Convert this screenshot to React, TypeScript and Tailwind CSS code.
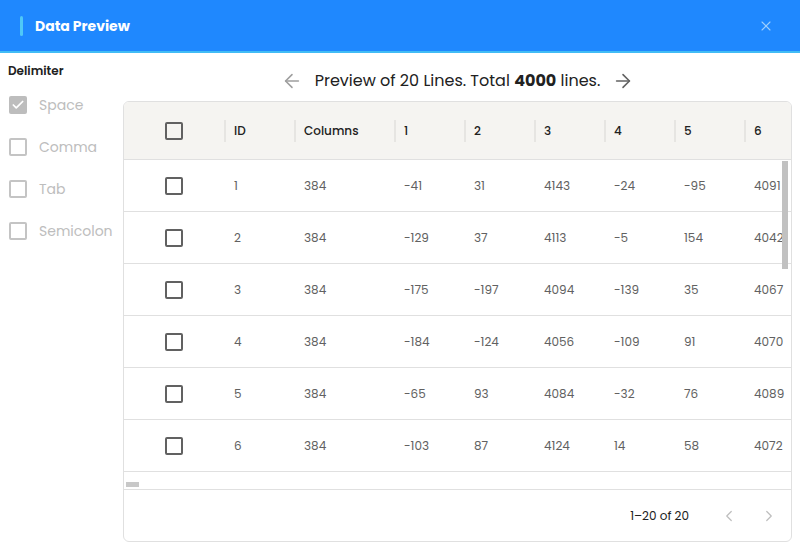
import { ArrowLeft, ArrowRight, X, Check, ChevronLeft, ChevronRight } from 'lucide-react';

const rows = [
  ['1', '384', '-41', '31', '4143', '-24', '-95', '4091'],
  ['2', '384', '-129', '37', '4113', '-5', '154', '4042'],
  ['3', '384', '-175', '-197', '4094', '-139', '35', '4067'],
  ['4', '384', '-184', '-124', '4056', '-109', '91', '4070'],
  ['5', '384', '-65', '93', '4084', '-32', '76', '4089'],
  ['6', '384', '-103', '87', '4124', '14', '58', '4072'],
];

const headers = ['ID', 'Columns', '1', '2', '3', '4', '5', '6'];
const widths = ['w-[70px]', 'w-[100px]', 'w-[70px]', 'w-[70px]', 'w-[70px]', 'w-[70px]', 'w-[70px]', 'w-[70px]'];

function Box({ checked, disabled }: { checked?: boolean; disabled?: boolean }) {
  if (checked) {
    return (
      <span className="flex h-[18px] w-[18px] items-center justify-center rounded-[2px] bg-[#bdbdbd]">
        <Check size={14} strokeWidth={3} className="text-white" />
      </span>
    );
  }
  return (
    <span
      className={`block h-[18px] w-[18px] rounded-[2px] border-2 ${disabled ? 'border-[#c4c4c4]' : 'border-[#616161]'}`}
    />
  );
}

export default function App() {
  return (
    <div className="h-[550px] w-[800px] overflow-hidden bg-white font-['Poppins','Inter',sans-serif] text-[#212121]">
      <div className="flex h-[53px] items-center justify-between border-b-2 border-[#42bcf5] bg-[#1f88fe] pl-5 pr-[26px] pt-[1px]">
        <div className="flex items-center gap-3">
          <span className="h-5 w-[3px] rounded-sm bg-[#4fc8f7]" />
          <span className="text-[14px] font-bold text-white">Data Preview</span>
        </div>
        <X size={16} strokeWidth={1.6} className="text-[#9fcffd]" />
      </div>

      <div className="flex">
        <div className="w-[123px] shrink-0 pl-2 pt-[9px]">
          <div className="text-[12px] font-semibold text-[#212121]">Delimiter</div>
          <div className="mt-[16px] flex flex-col gap-6">
            {['Space', 'Comma', 'Tab', 'Semicolon'].map((l, i) => (
              <div key={l} className="flex h-[18px] items-center gap-3 pl-[1px]">
                <Box checked={i === 0} disabled />
                <span className="text-[14px] text-[#bdbdbd]">{l}</span>
              </div>
            ))}
          </div>
        </div>

        <div className="flex min-w-0 flex-1 flex-col pr-2">
          <div className="flex h-[48px] items-center justify-center gap-3 pt-[8px]">
            <ArrowLeft size={22} strokeWidth={1.7} className="text-[#9e9e9e]" />
            <span className="text-[16px]">
              Preview of 20 Lines. Total <b className="font-bold">4000</b> lines.
            </span>
            <ArrowRight size={22} strokeWidth={1.7} className="text-[#616161]" />
          </div>

          <div className="h-[441px] overflow-hidden rounded-md border border-[#e0e0e0]">
            <div className="relative overflow-hidden">
              <div className="flex h-[58px] w-max items-center border-b border-[#e0e0e0] bg-[#f5f4f1] pt-[1px]">
                <div className="flex w-[100px] justify-center">
                  <Box />
                </div>
                {headers.map((h, i) => (
                  <div key={h} className={`flex h-[22px] items-center border-l-2 border-[#e6e5e2] pl-2 text-[12px] font-medium text-[#212121] ${widths[i]}`}>
                    {h}
                  </div>
                ))}
              </div>
              <div className="relative h-[312px]">
                {rows.map((r) => (
                  <div key={r[0]} className="flex h-[52px] w-max items-center border-b border-[#e0e0e0]">
                    <div className="flex w-[100px] justify-center">
                      <Box />
                    </div>
                    {r.map((c, i) => (
                      <div key={i} className={`pl-[10px] text-[12px] text-[#616161] ${widths[i]}`}>
                        {c}
                      </div>
                    ))}
                  </div>
                ))}
                <div className="absolute right-[3px] top-[1px] h-[108px] w-[6px] bg-[#c1c1c1]" />
              </div>
              <div className="relative h-[18px] border-b border-[#e0e0e0]">
                <div className="absolute left-[2px] top-[10px] h-[5px] w-[13px] bg-[#c8c8c8]" />
              </div>
            </div>
            <div className="flex h-[52px] items-center justify-end pr-[13px] text-[12px] text-[#212121]">
              <span className="mr-[31px]">1–20 of 20</span>
              <ChevronLeft size={18} strokeWidth={1.6} className="mr-[22px] text-[#bdbdbd]" />
              <ChevronRight size={18} strokeWidth={1.6} className="text-[#bdbdbd]" />
            </div>
          </div>
        </div>
      </div>
    </div>
  );
}
